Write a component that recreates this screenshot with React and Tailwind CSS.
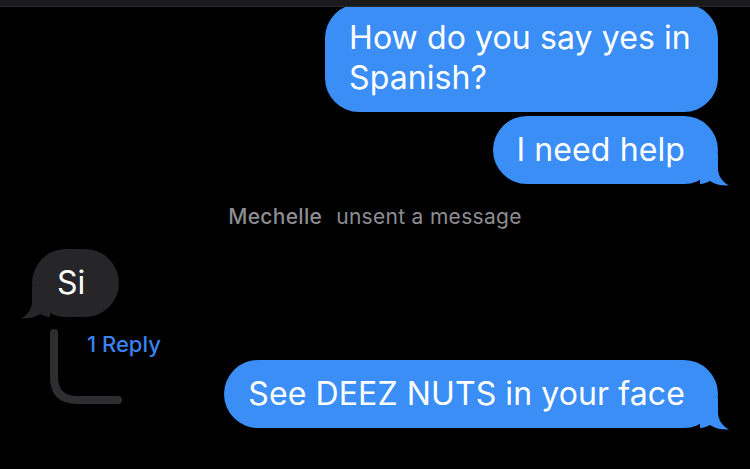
const SentTail = () => (
  <svg
    className="absolute right-[-12px] bottom-[-2px]"
    width="30"
    height="32"
    viewBox="0 0 30 32"
  >
    <path
      d="M0 0 H18 V14 C18 22 22 27.5 29 31.5 C22 32 15 30.5 10 27 C7 28.5 4 30 0 30 Z"
      fill="#3a8ef6"
    />
  </svg>
);

const ReceivedTail = () => (
  <svg
    className="absolute left-[-12px] bottom-[-2px]"
    width="30"
    height="32"
    viewBox="0 0 30 32"
  >
    <path
      d="M30 0 H12 V14 C12 22 8 27.5 1 31.5 C8 32 15 30.5 20 27 C23 28.5 26 30 30 30 Z"
      fill="#262628"
    />
  </svg>
);

const Sent = ({ children, tail, className = "pr-[33px]" }) => (
  <div
    className={`relative bg-[#3a8ef6] text-white rounded-[34px] pl-[24px] py-[14px] text-[32px] leading-[40px] tracking-[0.1px] ${className}`}
  >
    {tail && <SentTail />}
    <span className="relative">{children}</span>
  </div>
);

export default function App() {
  return (
    <div className="w-[750px] h-[469px] bg-black overflow-hidden flex flex-col font-['Inter',sans-serif]">
      <div className="h-[7px] shrink-0 bg-[#1a1a1c] border-b border-[#2c2c2e] relative z-10" />

      <div className="flex flex-col">
        {/* outgoing */}
        <div className="flex justify-end pr-[32px] mt-[-3px]">
          <Sent className="w-[393px] pr-[20px]">How do you say yes in Spanish?</Sent>
        </div>
        <div className="flex justify-end pr-[32px] mt-[4px]">
          <Sent tail>I need help</Sent>
        </div>

        {/* unsent notice */}
        <div className="flex justify-center gap-[14px] mt-[20px] text-[21px] leading-[26px] tracking-[0.3px] text-[#8d8d92]">
          <span className="font-medium">Mechelle</span>
          <span>unsent a message</span>
        </div>

        {/* incoming */}
        <div className="flex pl-[32px] mt-[19px]">
          <div className="relative bg-[#262628] text-white rounded-[34px] pl-[25px] pr-[34px] py-[14px] text-[32px] leading-[40px]">
            <ReceivedTail />
            <span className="relative">Si</span>
          </div>
        </div>

        <div className="flex items-start justify-between pr-[32px]">
          <div className="flex items-start">
            <svg
              className="ml-[46px] mt-[12px] shrink-0"
              width="80"
              height="80"
              viewBox="0 0 80 80"
            >
              <path
                d="M8 4 V48 Q8 71 31 71 H72"
                fill="none"
                stroke="#2e2e30"
                strokeWidth="8"
                strokeLinecap="round"
              />
            </svg>
            <span className="ml-[-39px] mt-[13px] text-[22px] leading-[28px] font-medium text-[#3a82f0]">
              1 Reply
            </span>
          </div>
          <div className="mt-[43px]">
            <Sent tail>See DEEZ NUTS in your face</Sent>
          </div>
        </div>
      </div>
    </div>
  );
}
